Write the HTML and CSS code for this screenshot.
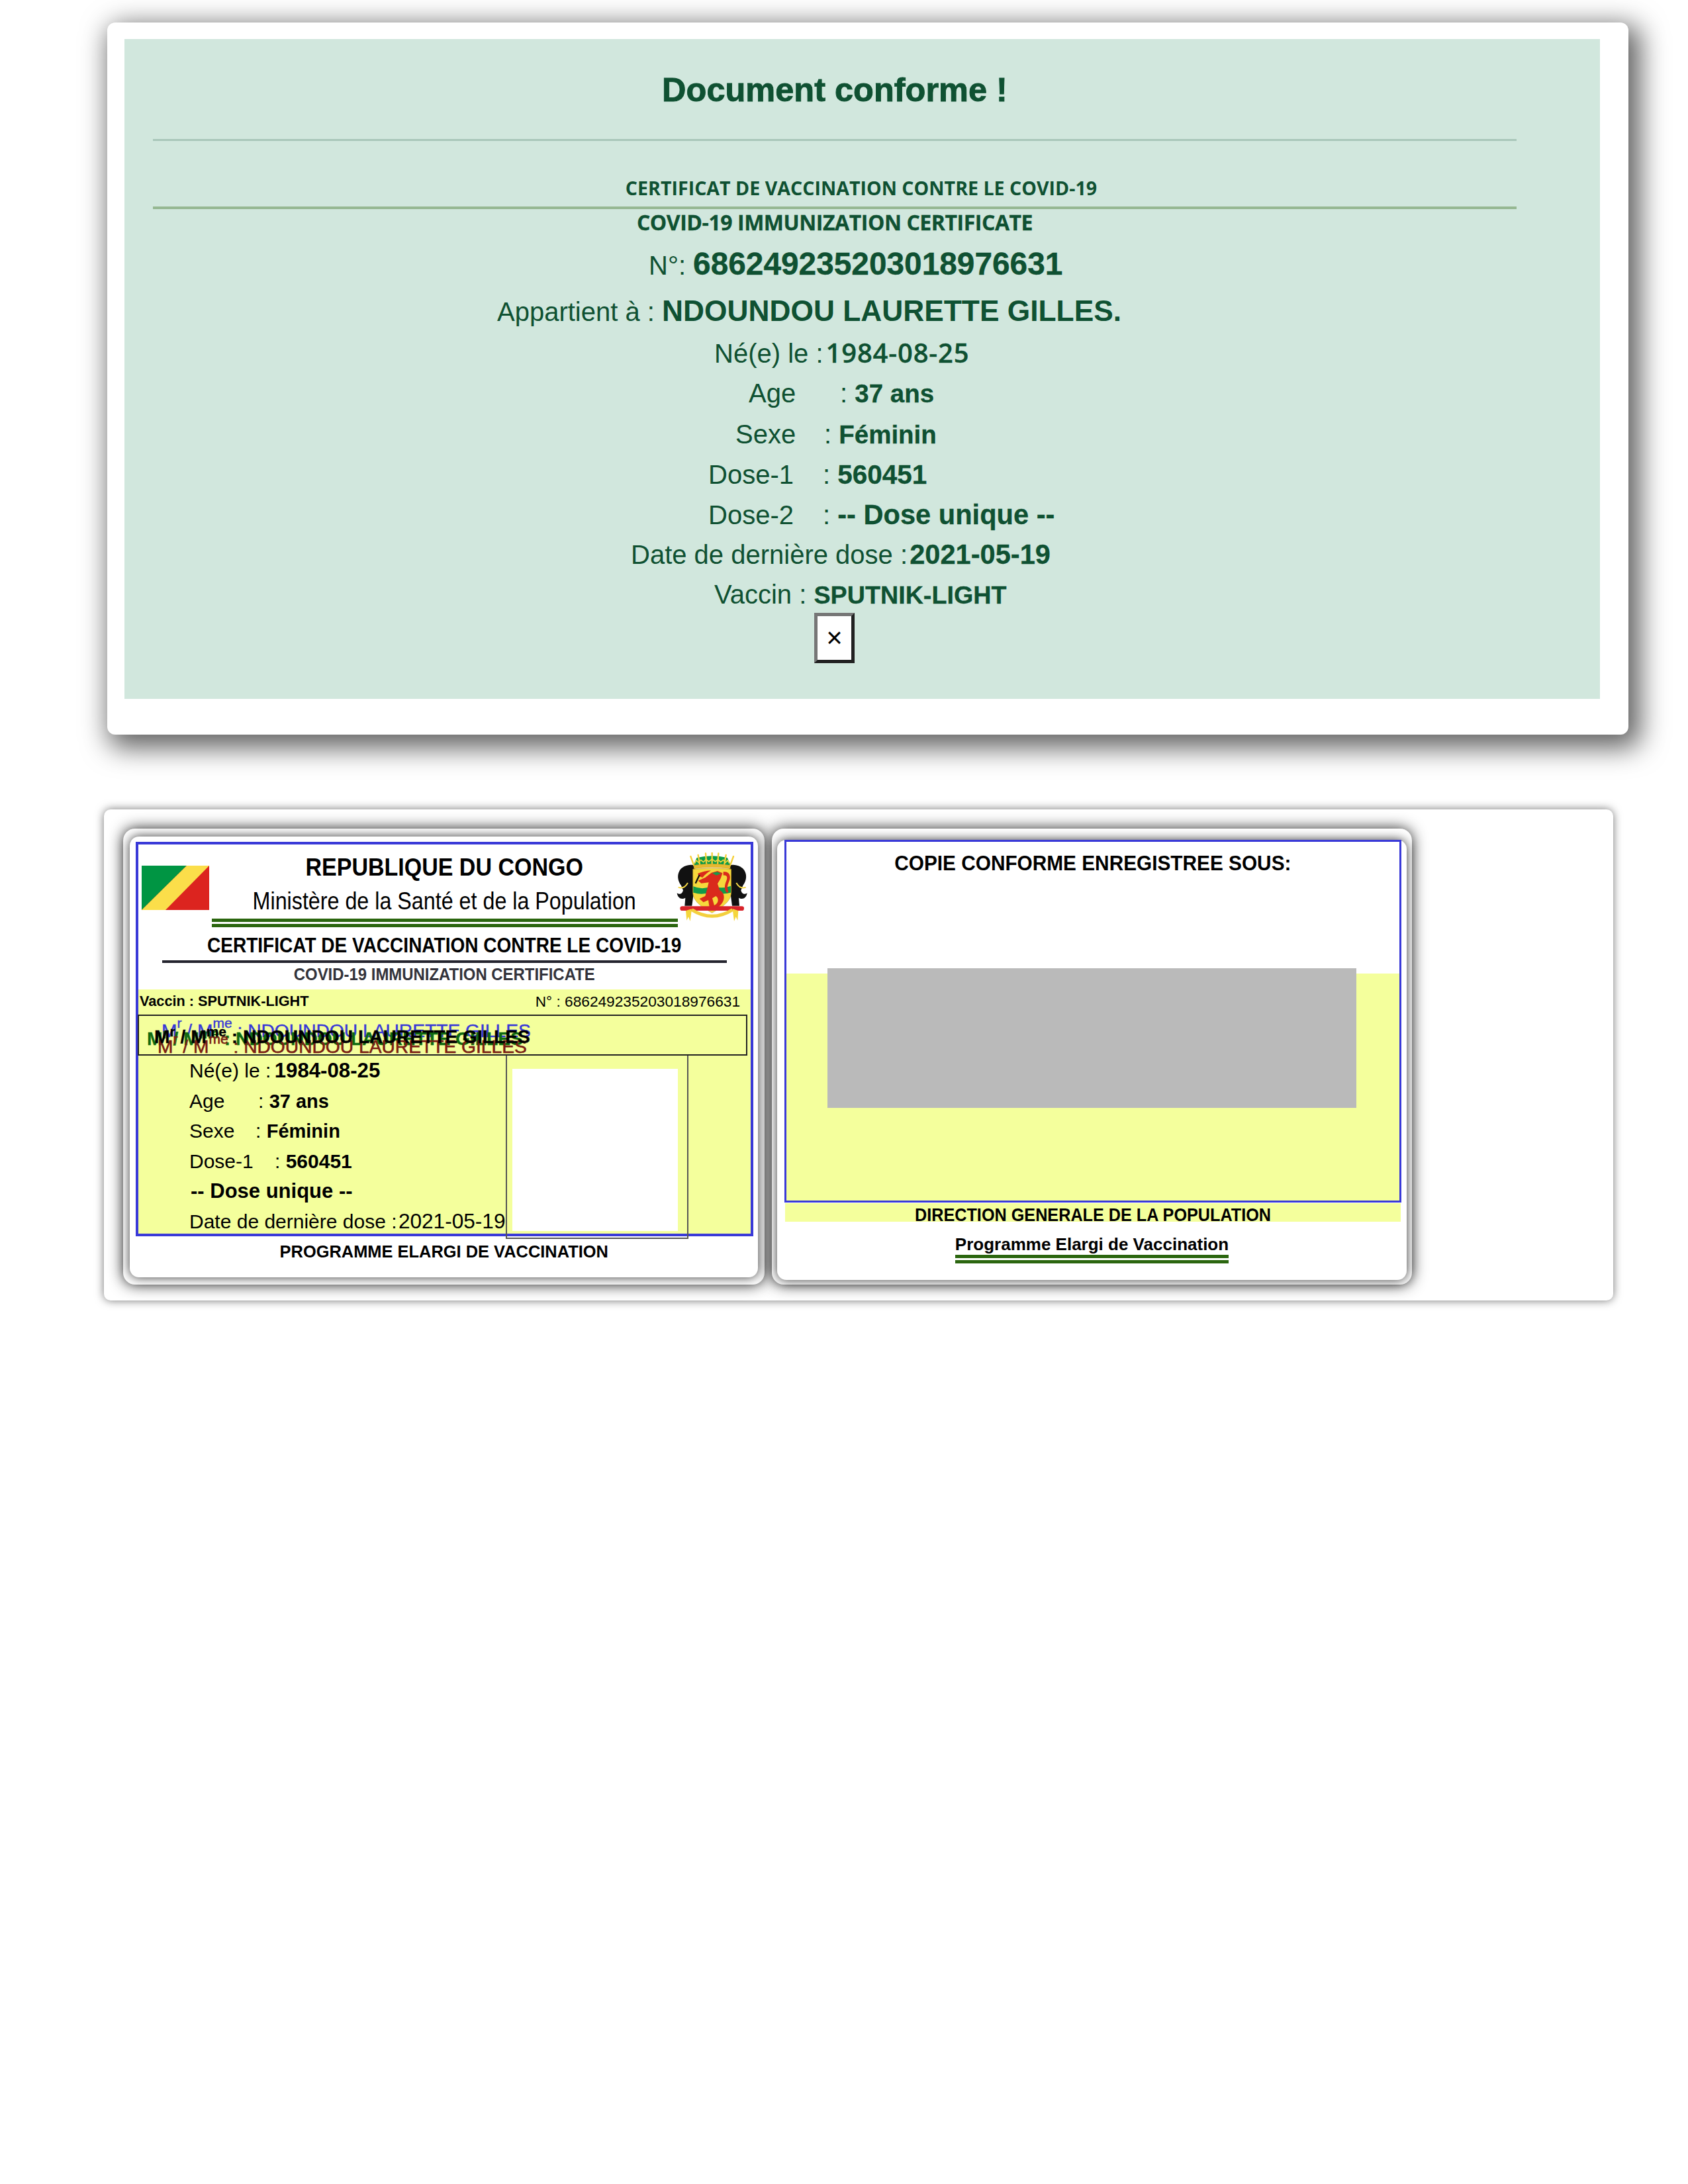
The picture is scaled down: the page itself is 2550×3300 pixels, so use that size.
FILE: index.html
```html
<!DOCTYPE html>
<html lang="fr">
<head>
<meta charset="utf-8">
<title>Document conforme</title>
<link rel="stylesheet" href="styles.css">
</head>
<body>
<main class="page">
  <section class="modal">
    <div class="alert">
      <h2 class="title">Document conforme !</h2>
      <hr class="rule rule-soft">
      <div class="cert-fr">CERTIFICAT DE VACCINATION CONTRE LE COVID-19</div>
      <hr class="rule rule-green">
      <div class="cert-en">COVID-19 IMMUNIZATION CERTIFICATE</div>
      <div class="line-big at-num">N°: <b class="v-num">686249235203018976631</b></div>
      <div class="line-big at-name">Appartient à : <b class="v-name">NDOUNDOU LAURETTE GILLES.</b></div>
      <div class="row at-ne">Né(e) le : <b class="v-date">1984-08-25</b></div>
      <div class="row at-age"><span class="k k-age">Age</span>: <b class="v-age">37 ans</b></div>
      <div class="row at-sexe"><span class="k k-sexe">Sexe</span>: <b class="v-sexe">Féminin</b></div>
      <div class="row at-dose"><span class="k k-d1">Dose-1</span>: <b class="v-d1">560451</b></div>
      <div class="row at-dose"><span class="k k-d2">Dose-2</span>: <b class="v-d2">-- Dose unique --</b></div>
      <div class="row at-last">Date de dernière dose : <b class="v-last">2021-05-19</b></div>
      <div class="row at-ne">Vaccin : <b class="v-vac">SPUTNIK-LIGHT</b></div>
      <button class="close" type="button">×</button>
    </div>
  </section>

  <section class="panel">
    <div class="ring ring-left">
      <article class="card">
        <div class="frame frame-front">
          <header class="head">
            <div class="head-top">
              <svg class="flag" viewBox="0 0 102 67" aria-hidden="true">
                <rect width="102" height="67" fill="#dc241f"/>
                <polygon points="0,0 68,0 0,67" fill="#009543"/>
                <polygon points="68,0 102,0 36,67 0,67" fill="#fbde4a"/>
              </svg>
              <div class="head-titles">
                <div class="rep"><span class="sx sx-rep">REPUBLIQUE DU CONGO</span></div>
                <div class="min"><span class="sx sx-min">Ministère de la Santé et de la Population</span></div>
              </div>
              <svg class="emblem" viewBox="96 54 330 315" aria-hidden="true">
                <path d="M180 112C150 106 120 116 108 140C97 162 104 186 117 204L126 226C122 244 108 246 98 238C101 262 120 270 136 260L133 296L166 296L176 220Z" fill="#111"/>
                <path d="M334 112C364 106 394 116 406 140C417 162 410 186 397 204L388 226C392 244 406 246 416 238C413 262 394 270 378 260L381 296L348 296L338 220Z" fill="#111"/>
                <path d="M104 212Q130 222 147 192" fill="none" stroke="#f3d646" stroke-width="6"/>
                <path d="M410 212Q384 222 367 192" fill="none" stroke="#f3d646" stroke-width="6"/>
                <path d="M172 112L188 78Q257 62 326 78L342 112Z" fill="#0a9a4a"/>
                <path d="M160 72L176 116M194 66L202 112M228 58L232 110M257 54V110M286 58L282 110M320 66L312 112M354 72L338 116" stroke="#f5cf38" stroke-width="7" stroke-linecap="round"/>
                <path d="M178 104L186 90L196 100L206 88L218 98L230 86L242 96L257 84L272 96L284 86L296 98L308 88L318 100L328 90L336 104" fill="none" stroke="#f5d63b" stroke-width="5"/>
                <path d="M176 112Q257 100 338 112L340 128Q257 116 174 128Z" fill="#e7b92f" stroke="#b9881a" stroke-width="1"/>
                <path d="M170 130Q257 122 344 130L344 235C344 280 292 308 257 328C222 308 170 280 170 235Z" fill="#f6d83c" stroke="#a5891c" stroke-width="1.5"/>
                <path d="M172 208Q215 226 258 206Q300 222 342 206L342 236Q300 248 258 232Q215 250 172 236Z" fill="#12994a"/>
                <path d="M254 146L282 138L304 148L296 172L282 196L292 226C322 240 318 292 268 310L254 302L276 288C288 278 286 258 274 252L258 262L268 298L246 310L240 270L218 280L200 264L226 252L234 222L242 190L208 194L194 182L226 168Z" fill="#da2a1c"/>
                <path d="M308 142C334 138 346 160 334 186C326 204 324 216 332 232L324 238C310 222 314 200 322 182C330 164 322 156 308 158Z" fill="#da2a1c"/>
                <path d="M192 150Q220 138 252 136Q228 150 214 168L198 162Z" fill="#da2a1c"/>
                <path d="M200 156L182 194" stroke="#111" stroke-width="7"/>
                <path d="M258 148L280 142L298 150L276 158Z" fill="#1a9a4a"/>
                <rect x="112" y="298" width="290" height="20" rx="10" fill="#d8232a"/>
                <path d="M165 314Q257 372 350 314" fill="none" stroke="#f3d03e" stroke-width="15"/>
                <path d="M138 318L165 310L158 366L150 346L142 362Z" fill="#f5d63b"/>
                <path d="M376 318L350 310L357 366L365 346L373 362Z" fill="#f5d63b"/>
              </svg>
            </div>
            <div class="bars"></div>
            <div class="cert-title"><span class="sx sx-cert">CERTIFICAT DE VACCINATION CONTRE LE COVID-19</span></div>
            <div class="cert-sub"><span class="sx sx-sub">COVID-19 IMMUNIZATION CERTIFICATE</span></div>
          </header>
          <div class="yellow">
            <div class="meta">
              <b class="meta-vac">Vaccin : SPUTNIK-LIGHT</b>
              <span class="meta-num">N° : 686249235203018976631</span>
            </div>
            <div class="namebox">
              <div class="nm nm-blue">M<sup>r</sup> / M<sup>me</sup> : NDOUNDOU LAURETTE GILLES</div>
              <div class="nm nm-green">M<sup>r</sup> / M<sup>me</sup> : NDOUNDOU LAURETTE GILLES</div>
              <div class="nm nm-maroon">M<sup>r</sup> / M<sup>me</sup> : NDOUNDOU LAURETTE GILLES</div>
              <div class="nm nm-black">M<sup>r</sup> / M<sup>me</sup> : NDOUNDOU LAURETTE GILLES</div>
            </div>
            <div class="body">
              <div class="fields">
                <div class="f">Né(e) le : <b class="fv-date">1984-08-25</b></div>
                <div class="f"><span class="fk fk-age">Age</span>: <b class="fv-small">37 ans</b></div>
                <div class="f"><span class="fk fk-sexe">Sexe</span>: <b class="fv-small">Féminin</b></div>
                <div class="f"><span class="fk fk-dose">Dose-1</span>: <b>560451</b></div>
                <div class="f f-unique"><b>-- Dose unique --</b></div>
                <div class="f">Date de dernière dose : <span class="fv-last">2021-05-19</span></div>
              </div>
              <div class="photo"><div class="photo-img"></div></div>
            </div>
          </div>
        </div>
        <div class="foot-left"><span class="sx sx-foot">PROGRAMME ELARGI DE VACCINATION</span></div>
      </article>
    </div>

    <div class="ring ring-right">
      <article class="card">
        <div class="frame frame-back">
          <div class="back-top"><span class="sx sx-copie">COPIE CONFORME ENREGISTREE SOUS:</span></div>
          <div class="back-yellow"><div class="redacted"></div></div>
        </div>
        <div class="dg"><span class="sx sx-dg">DIRECTION GENERALE DE LA POPULATION</span></div>
        <div class="pev"><span class="pev-text">Programme Elargi de Vaccination</span></div>
      </article>
    </div>
  </section>
</main>
</body>
</html>
```

FILE: styles.css
```css
* { box-sizing: border-box; }
html, body { margin: 0; background: #fff; }
body { font-family: "Liberation Sans", Arial, sans-serif; height: 3300px; overflow: hidden; }
.page { padding-top: 34px; }

/* Modal */
.modal {
  width: 2298px; height: 1076px; margin-left: 162px; padding: 25px 43px 54px 26px;
  background: #fff; border-radius: 12px;
  box-shadow: 10px 12px 40px 8px rgba(0,0,0,.62);
}
.alert { height: 997px; padding: 40px 126px 0 43px; background: #d1e7dd; color: #0f5132; }
.title { margin: 0 0 37px; font-size: 50.5px; line-height: 74px; font-weight: 700; text-align: center; -webkit-text-stroke: .9px #0f5132; }
.rule { height: 3px; margin: 0; border: 0; }
.rule-soft { background: #a9c7b9; }
.rule-green { height: 4px; margin-top: 8px; background: #96b892; }
.cert-fr { margin-top: 51px; height: 40px; padding-left: 80px; font: 700 28.6px/40px "Open Sans", sans-serif; text-align: center; }
.cert-en { margin-top: 2px; height: 36px; font: 700 32px/36px "Open Sans", sans-serif; letter-spacing: -.45px; text-align: center; -webkit-text-stroke: .3px #0f5132; }
.line-big { font-size: 40px; line-height: 58px; white-space: nowrap; }
.at-num { margin-top: 16px; padding-left: 749px; }
.at-name { margin-top: 11px; margin-bottom: 4px; padding-left: 520px; }
.v-num { font-size: 47.8px; -webkit-text-stroke: .4px #0f5132; }
.v-name { font-size: 44.3px; }
.row { font-size: 40px; line-height: 60.4px; white-space: nowrap; }
.at-ne { padding-left: 848px; }
.at-age { padding-left: 900px; }
.at-sexe { padding-left: 880px; }
.at-dose { padding-left: 839px; }
.at-last { padding-left: 722px; }
.k { display: inline-block; }
.k-age { width: 138px; }
.k-sexe { width: 134px; }
.k-d1, .k-d2 { width: 173px; }
.v-date { margin-left: -7px; font: 600 40px "Open Sans", sans-serif; letter-spacing: .8px; -webkit-text-stroke: .3px #0f5132; }
.v-age { font-size: 38.5px; -webkit-text-stroke: .3px #0f5132; }
.v-sexe { font-size: 38.5px; -webkit-text-stroke: .3px #0f5132; }
.v-d1 { font-size: 40.5px; -webkit-text-stroke: .3px #0f5132; }
.v-d2 { font-size: 41.6px; -webkit-text-stroke: .3px #0f5132; }
.v-last { margin-left: -8px; font-size: 41.6px; -webkit-text-stroke: .3px #0f5132; }
.v-vac { font-size: 37.7px; -webkit-text-stroke: .3px #0f5132; }
.close {
  display: block; width: 61px; height: 76px; margin: -4px 0 0 999px; padding: 0;
  background: #fff; color: #000; font: 42px/1 "Liberation Sans", sans-serif;
  border: 5px solid; border-color: #767676 #212121 #212121 #767676;
}

/* Panel */
.panel {
  display: flex; gap: 11px; width: 2280px; height: 742px;
  margin: 113px 0 0 157px; padding: 29px 0 0 29px;
  background: #fff; border-radius: 10px;
  box-shadow: 0 0 14px rgba(0,0,0,.55);
}
.ring { height: 689px; padding: 12px 10px 11px; background: #fff; border-radius: 18px; box-shadow: 0 0 22px rgba(0,0,0,.85); }
.ring-left { width: 969px; }
.ring-right { width: 967px; padding: 13px 8px 11px; }
.card { position: relative; height: 100%; background: #fff; border-radius: 14px; box-shadow: 0 0 16px rgba(0,0,0,.8); }
.frame { border: 4px solid #3a3ad8; }
.frame-front { height: 596px; margin: 0 7px 0 9px; position: relative; top: 8px; }
.sx { display: inline-block; white-space: nowrap; }
.sx-rep { transform: scaleX(.919); }
.sx-min { transform: scaleX(.896); }
.sx-cert { transform: scaleX(.904); }
.sx-sub { transform: scaleX(.92); }
.sx-foot { transform: scaleX(.978); }
.sx-copie { transform: scaleX(.931); }
.sx-dg { transform: scaleX(.934); }

/* Front header */
.head { height: 219px; text-align: center; }
.head-top { display: flex; align-items: flex-start; height: 112px; }
.flag { flex: none; width: 102px; height: 67px; margin: 32px 0 0 5px; }
.head-titles { flex: 1; padding-left: 4px; }
.rep { margin-top: 12px; font-size: 37px; line-height: 46px; font-weight: 700; }
.min { margin-top: 5px; font-size: 36px; line-height: 46px; }
.emblem { flex: none; width: 110px; height: 105px; margin: 12px 2px 0 0; }
.bars { width: 704px; height: 13px; margin: 0 auto; border-top: 5px solid #2b660f; border-bottom: 5px solid #2b660f; }
.cert-title { width: 853px; height: 54px; margin: 0 auto; border-bottom: 4px solid #24242e; font-size: 31px; line-height: 56px; font-weight: 700; white-space: nowrap; }
.cert-sub { height: 36px; margin-top: -1px; font-size: 26px; line-height: 36px; font-weight: 700; color: #33333b; }

/* Front yellow */
.yellow { height: 369px; background: #f4ff9c; }
.meta { display: flex; justify-content: space-between; height: 38px; padding: 0 16px 0 2px; line-height: 36px; }
.meta-vac { font-size: 21.7px; }
.meta-num { font-size: 22.7px; }
.namebox { position: relative; width: 921px; height: 62px; margin-left: -1px; border: 2px solid #222; }
.nm { position: absolute; white-space: nowrap; font-size: 28.2px; line-height: 34px; }
.nm sup { font-size: 21px; line-height: 0; vertical-align: 10px; }
.nm-blue { left: 34px; top: 5px; color: #3838d8; -webkit-text-stroke: .4px #3838d8; }
.nm-green { left: 12px; top: 17px; color: #0f6b10; font-weight: 700; -webkit-text-stroke: .3px #0f6b10; }
.nm-maroon { left: 28px; top: 29px; color: #7a1c12; -webkit-text-stroke: .6px #7a1c12; }
.nm-black { left: 23px; top: 14px; color: #000; font-weight: 700; -webkit-text-stroke: .3px #000; }
.nm-maroon sup { vertical-align: 14px; }
.nm-blue sup { vertical-align: 14px; }
.body { display: flex; height: 269px; }
.fields { width: 555px; padding-left: 77px; font-size: 30px; line-height: 45.6px; white-space: nowrap; }
.f { height: 45.6px; }
.fv-date { font-size: 31.2px; margin-left: -3px; }
.fv-small { font-size: 29px; }
.fv-last { margin-left: -6px; font-size: 31.6px; }
.f-unique { padding-left: 2px; font-size: 31px; }
.fk { display: inline-block; }
.fk-age { width: 104px; }
.fk-sexe { width: 100px; }
.fk-dose { width: 129px; }
.photo { flex: none; width: 276px; height: 277px; padding: 20px 14px 0 8px; border: 2px solid #555; border-top: 0; }
.photo-img { width: 250px; height: 245px; background: #fff; }
.foot-left { position: relative; top: 8px; margin-top: 9px; font-size: 26px; line-height: 28px; font-weight: 700; text-align: center; }

/* Back */
.frame-back { height: 548px; margin: 4px 8px 0 11px; border-width: 3px; }
.back-top { height: 199px; padding-top: 14px; font-size: 32px; line-height: 36px; font-weight: 700; text-align: center; }
.back-yellow { height: 343px; background: #f4ff9c; }
.redacted { position: relative; top: -8px; width: 799px; height: 211px; margin-left: 62px; background: #bababa; }
.dg { height: 28px; margin: 1px 9px 0 12px; background: #f4ff9c; font-size: 27px; line-height: 36px; font-weight: 700; text-align: center; white-space: nowrap; }
.pev { margin-top: 19px; text-align: center; }
.pev-text { display: inline-block; height: 44px; border-bottom: 5px solid #2b660f; font-size: 26px; line-height: 30px; font-weight: 700; position: relative; }
.pev-text::after { content: ""; position: absolute; left: 0; right: 0; top: 31px; height: 5px; background: #2b660f; }
```
